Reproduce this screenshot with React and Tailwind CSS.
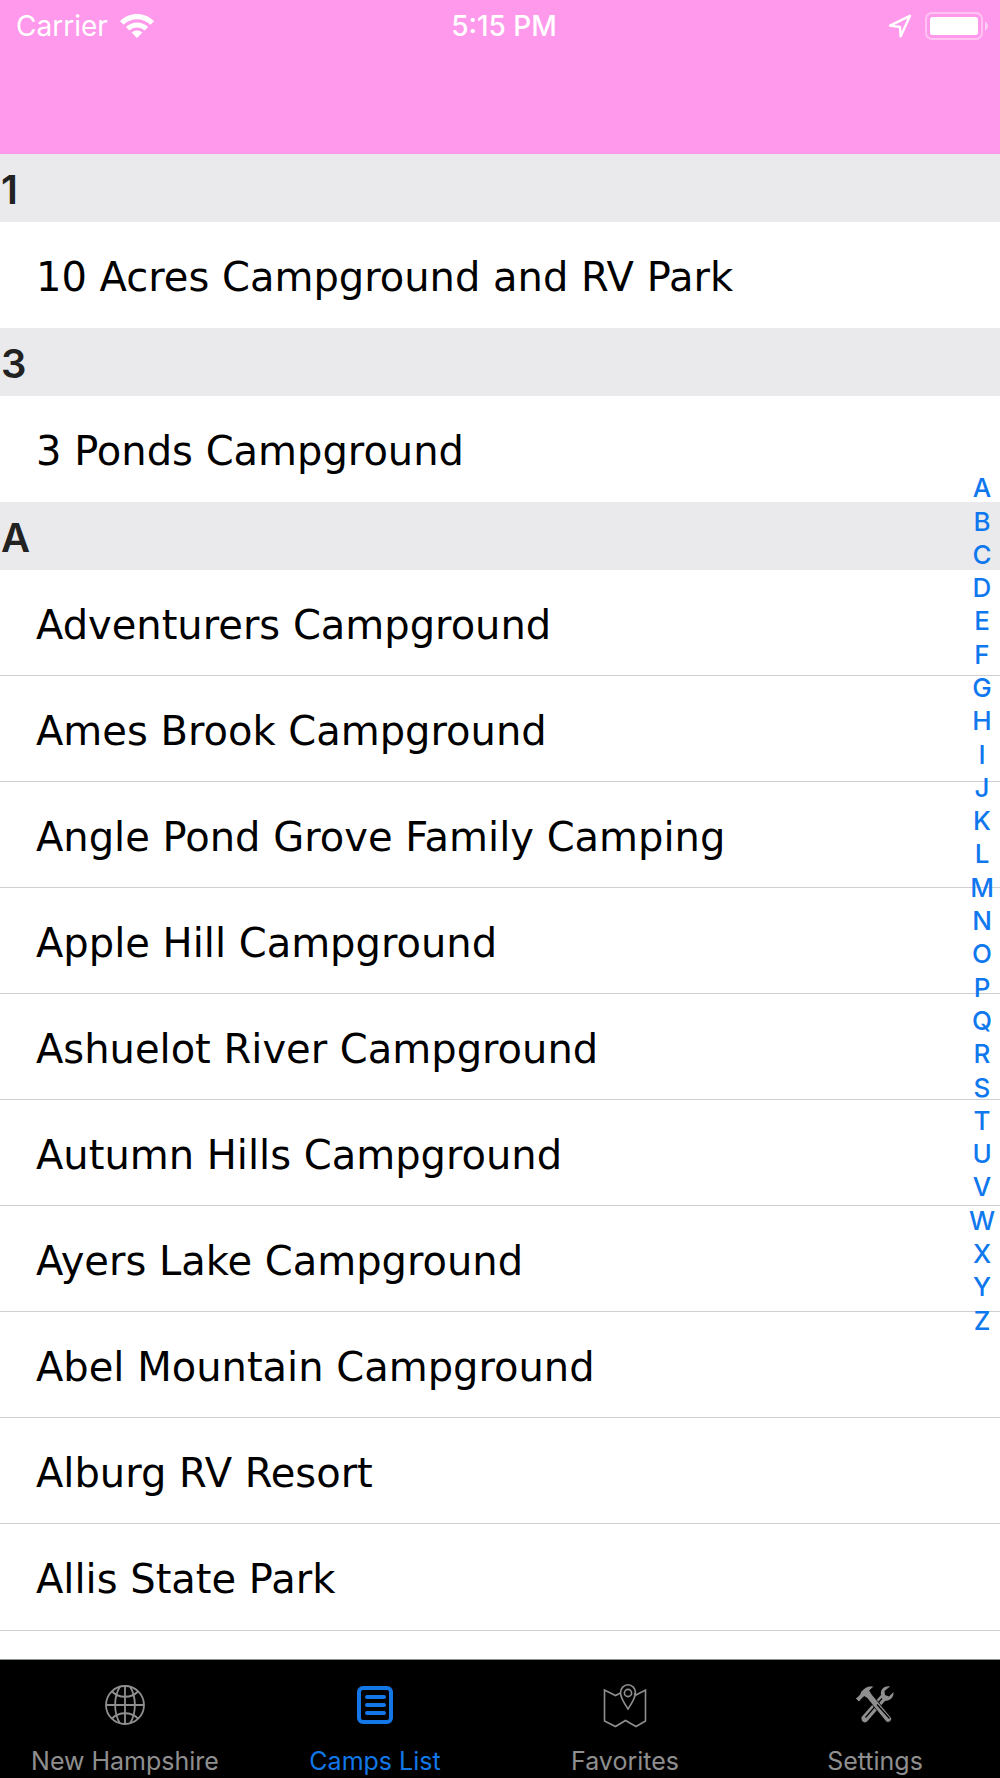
const sections = [
  { title: "1", camps: ["10 Acres Campground and RV Park"] },
  { title: "3", camps: ["3 Ponds Campground"] },
  {
    title: "A",
    camps: [
      "Adventurers Campground",
      "Ames Brook Campground",
      "Angle Pond Grove Family Camping",
      "Apple Hill Campground",
      "Ashuelot River Campground",
      "Autumn Hills Campground",
      "Ayers Lake Campground",
      "Abel Mountain Campground",
      "Alburg RV Resort",
      "Allis State Park",
    ],
  },
];

const letters = "ABCDEFGHIJKLMNOPQRSTUVWXYZ".split("");

const tabItem = "flex flex-1 flex-col items-center gap-4 pt-6";
const activeTab = "text-[#1377e8]";
const inactiveTab = "text-[#8f8f8f]";

function WifiIcon() {
  return (
    <svg className="h-6 w-[34px]" viewBox="0 0 34 24" fill="currentColor" aria-hidden="true">
      <path d="M0 7.2C9.5-2.4 24.5-2.4 34 7.2L30.4 10.8C23 3.4 11 3.4 3.6 10.8Z" />
      <path d="M5.9 13.1C12 7 22 7 28.1 13.1L24.6 16.6C20.4 12.5 13.6 12.5 9.4 16.6Z" />
      <path d="M11.6 18.6C14.6 15.7 19.4 15.7 22.4 18.6L17 24Z" />
    </svg>
  );
}

function LocationIcon() {
  return (
    <svg className="h-6 w-6" viewBox="0 0 24 24" fill="none" stroke="currentColor" strokeWidth="2.4" strokeLinejoin="round" aria-hidden="true">
      <path d="M22 1.8L2 11.6L12 13L12.6 22.4Z" />
    </svg>
  );
}

function BatteryIcon() {
  return (
    <svg className="h-7 w-16" viewBox="0 0 64 28" aria-hidden="true">
      <rect x="2" y="1" width="56" height="26" rx="6" fill="none" stroke="white" strokeOpacity="0.4" strokeWidth="2" />
      <rect x="6" y="5" width="48" height="18" rx="2.5" fill="white" />
      <path d="M61 9.5C63 10.5 64 12 64 14C64 16 63 17.5 61 18.5Z" fill="white" fillOpacity="0.5" />
    </svg>
  );
}

function GlobeIcon() {
  return (
    <svg className="size-11" viewBox="0 0 44 44" fill="none" stroke="currentColor" strokeWidth="1.8" aria-hidden="true">
      <circle cx="22" cy="21" r="19" />
      <path d="M22 2V40M3 21H41" />
      <path d="M17 2.5C10.5 13 10.5 29 17 39.5M27 2.5C33.5 13 33.5 29 27 39.5" />
      <path d="M9 7.5C16 14.5 28 14.5 35 7.5M9 34.5C16 27.5 28 27.5 35 34.5" />
    </svg>
  );
}

function ListIcon() {
  return (
    <svg className="size-11" viewBox="0 0 44 44" fill="none" stroke="currentColor" strokeWidth="4" strokeLinecap="round" aria-hidden="true">
      <rect x="6" y="4" width="32" height="34" rx="4" />
      <path d="M14 13H31M14 21H31M14 29H31" />
    </svg>
  );
}

function MapIcon() {
  return (
    <svg className="size-11" viewBox="0 0 44 44" fill="none" stroke="currentColor" strokeWidth="1.6" aria-hidden="true">
      <path d="M17.5 9L12.5 11.5L1.5 6V37L12.5 42.5L22.5 36.5L33 42.5L42.5 37V6L33 11L31 9.5" />
      <path d="M25 25C22 20.5 17.5 14 17.5 8.8A7.5 8 0 0 1 32.500 8.8C32.5 14 28 20.5 25 25Z" />
      <circle cx="25" cy="9" r="3.6" />
    </svg>
  );
}

function ToolsIcon() {
  return (
    <svg className="size-11" viewBox="0 0 44 44" aria-hidden="true">
      {/* wrench */}
      <path d="M37 2.5C32 1.5 27 5 28 11L8.500 33C8 38 12 40 14.500 37L32 17C37 17 41 13.5 40.5 8L36 12.5L32 11L31.5 7Z" fill="currentColor" />
      <path d="M12.500 33.500L29 14.5" stroke="black" strokeWidth="1.2" />
      {/* hammer */}
      <path d="M2.500 14.5L6 18L8.500 15L11 12.5L14 14L32.5 37C34.5 40 39.500 37 38.500 34L19 10.5L16.5 6.5L21 2.500C16 1 12 3 8 7.5L6.500 11Z" fill="currentColor" stroke="black" strokeWidth="0.8" />
      <path d="M24 20.5L36.500 34.500" stroke="black" strokeWidth="1.2" />
    </svg>
  );
}

const tabs = [
  { label: "New Hampshire", Icon: GlobeIcon },
  { label: "Camps List", Icon: ListIcon, active: true },
  { label: "Favorites", Icon: MapIcon },
  { label: "Settings", Icon: ToolsIcon },
];

function App() {
  return (
    <div className="flex h-screen flex-col bg-white font-['Inter',sans-serif]">
      {/* Status bar */}
      <header className="h-[154px] shrink-0 bg-[#ff99eb] text-white">
        <div className="grid grid-cols-3 items-center px-3 pt-1 text-[28px] leading-[44px]">
          <div className="flex items-center gap-3 pl-1">
            <span>Carrier</span>
            <WifiIcon />
          </div>
          <span className="pl-2 text-center font-medium">5:15 PM</span>
          <div className="flex items-center justify-end gap-3">
            <LocationIcon />
            <BatteryIcon />
          </div>
        </div>
      </header>

      <div className="relative min-h-0 flex-1">
        {/* Camps */}
        <main className="h-full overflow-y-auto [scrollbar-width:none]">
          {sections.map((section) => (
            <section key={section.title} id={section.title}>
              <h2 className="h-[68px] bg-[#eaeaec] px-px text-[40px] leading-[72px] font-semibold text-[#222222]">
                {section.title}
              </h2>
              <ul className="divide-y divide-[#cfcfd1]">
                {section.camps.map((camp) => (
                  <li
                    key={camp}
                    className="flex h-[106px] items-center px-9 pt-1 font-['DejaVu_Sans',sans-serif] text-[40px] text-black"
                  >
                    {camp}
                  </li>
                ))}
              </ul>
            </section>
          ))}
          <div className="h-7 border-t border-[#cfcfd1]" />
        </main>

        {/* Letter index */}
        <nav
          aria-label="Sections"
          className="absolute inset-y-0 right-0 flex w-9 flex-col justify-center pb-1 text-[26px] font-medium text-[#0f78ee]"
        >
          <div className="flex h-[57.6%] flex-col items-center justify-between leading-8">
            {letters.map((letter) => (
              <a key={letter} href={`#${letter}`}>
                {letter}
              </a>
            ))}
          </div>
        </nav>
      </div>

      {/* Tab bar */}
      <nav aria-label="Tabs" className="flex h-[119px] shrink-0 border-t border-[#8a928c] bg-black">
        {tabs.map(({ label, Icon, active }) => (
          <button
            key={label}
            type="button"
            aria-current={active ? "page" : undefined}
            className={`${tabItem} ${active ? activeTab : inactiveTab}`}
          >
            <Icon />
            <span className="text-[25px] leading-[34px]">{label}</span>
          </button>
        ))}
      </nav>
    </div>
  );
}

export default App;
